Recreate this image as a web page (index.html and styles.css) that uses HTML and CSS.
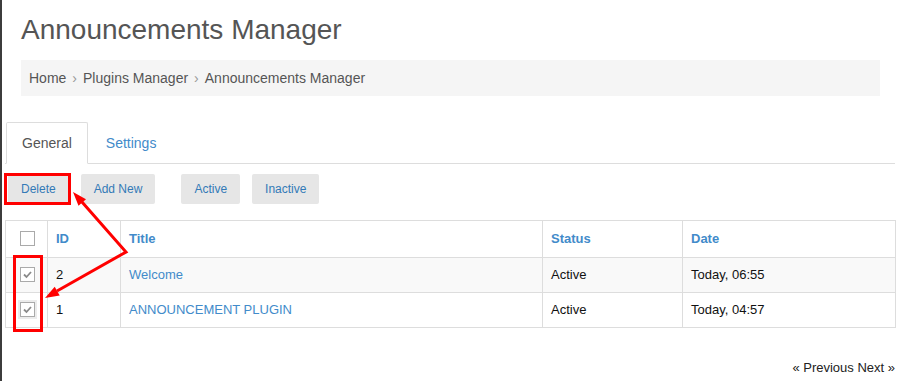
FILE: index.html
```html
<!DOCTYPE html>
<html lang="en">
<head>
  <meta charset="UTF-8" />
  <title>Announcements Manager</title>
  <link rel="stylesheet" href="styles.css">
</head>
<body>

  <div class="page">
    <div class="page-header">
      <h1>Announcements Manager</h1>
      <ol class="breadcrumb">
        <li>Home</li>
        <li>Plugins Manager</li>
        <li>Announcements Manager</li>
      </ol>
    </div>

    <ul class="tabs">
      <li class="active"><a href="#">General</a></li>
      <li><a href="#">Settings</a></li>
    </ul>

    <div class="toolbar">
      <div class="btn-group">
        <button class="btn">Delete</button>
        <button class="btn">Add New</button>
      </div>
      <div class="btn-group">
        <button class="btn">Active</button>
        <button class="btn">Inactive</button>
      </div>
    </div>

    <table class="list">
      <colgroup>
        <col class="col-check">
        <col class="col-id">
        <col class="col-title">
        <col class="col-status">
        <col class="col-date">
      </colgroup>
      <thead>
        <tr>
          <th class="check"><span class="box"></span></th>
          <th>ID</th>
          <th>Title</th>
          <th>Status</th>
          <th>Date</th>
        </tr>
      </thead>
      <tbody>
        <tr class="odd">
          <td class="check">
            <span class="box checked">
              <svg width="13" height="13" viewBox="0 0 13 13"><polyline points="3,6.5 5.5,9 10,4" fill="none" stroke="#8a8a8a" stroke-width="1.8"/></svg>
            </span>
          </td>
          <td>2</td>
          <td><a href="#">Welcome</a></td>
          <td>Active</td>
          <td>Today, 06:55</td>
        </tr>
        <tr>
          <td class="check">
            <span class="box checked focus">
              <svg width="13" height="13" viewBox="0 0 13 13"><polyline points="3,6.5 5.5,9 10,4" fill="none" stroke="#8a8a8a" stroke-width="1.8"/></svg>
            </span>
          </td>
          <td>1</td>
          <td><a href="#">ANNOUNCEMENT PLUGIN</a></td>
          <td>Active</td>
          <td>Today, 04:57</td>
        </tr>
      </tbody>
    </table>

    <div class="pager">&laquo; Previous Next &raquo;</div>
  </div>

  <!-- red annotations drawn over the screenshot -->
  <svg class="marks" width="899" height="381" viewBox="0 0 899 381">
    <g fill="none" stroke="#ff0000" stroke-width="3">
      <rect x="5.5" y="174.5" width="64" height="29"/>
      <rect x="14.5" y="256.5" width="27" height="74"/>
      <polyline points="82,202 126,252 57,291" stroke-linejoin="miter"/>
    </g>
    <g fill="#ff0000">
      <polygon points="73,192 86,199.2 78.5,205.8"/>
      <polygon points="45,298 59.7,295.4 54.7,286.8"/>
    </g>
  </svg>

</body>
</html>
```

FILE: styles.css
```css
* {
  box-sizing: border-box;
}

html, body {
  margin: 0;
  height: 100%;
}

body {
  font-family: "Liberation Sans", Arial, sans-serif;
  font-size: 13px;
  color: #222;
  background: #fff;
  border-left: 2px solid #3c3c3c;
  overflow: hidden;
}

a {
  color: #428bca;
  text-decoration: none;
}

.page {
  padding: 0 4px 0 3px;
}

.page-header {
  padding: 14px 15px 0 16px;
}

h1 {
  margin: 0;
  font-size: 28px;
  line-height: 32px;
  font-weight: normal;
  color: #555;
}

.breadcrumb {
  list-style: none;
  margin: 14px 0 0;
  padding: 8px 8px;
  background: #f5f5f5;
  font-size: 14px;
  line-height: 20px;
  color: #555;
  display: flex;
}

.breadcrumb li + li::before {
  content: "\203A";
  padding: 0 6px;
  color: #999;
}

.tabs {
  list-style: none;
  margin: 26px 0 0;
  padding: 0 0 0 1px;
  display: flex;
  border-bottom: 1px solid #ddd;
}

.tabs li {
  margin-bottom: -1px;
}

.tabs a {
  display: block;
  padding: 10px 15px;
  margin-right: 2px;
  font-size: 14px;
  line-height: 20px;
  border: 1px solid transparent;
  border-radius: 2px 2px 0 0;
}

.tabs .active a {
  color: #555;
  background: #fff;
  border-color: #ddd;
  border-bottom-color: #fff;
}

.toolbar {
  display: flex;
  gap: 26px;
  margin-top: 10px;
  padding-left: 3px;
}

.btn-group {
  display: flex;
  gap: 12px;
}

.btn {
  height: 30px;
  padding: 0 13px;
  font-family: inherit;
  font-size: 12px;
  line-height: 30px;
  color: #337ab7;
  background: #e6e6e6;
  border: none;
  border-radius: 2px;
  cursor: pointer;
}

.list {
  margin-top: 16px;
  width: 890px;
  table-layout: fixed;
  border-collapse: collapse;
  border: 1px solid #ddd;
}

.col-check { width: 42px; }
.col-id { width: 73px; }
.col-title { width: 422px; }
.col-status { width: 140px; }
.col-date { width: 213px; }

.list th,
.list td {
  border: 1px solid #ddd;
  text-align: left;
  line-height: 20px;
  font-size: 13px;
}

.list th {
  padding: 8px;
  color: #428bca;
  font-weight: bold;
}

.list td {
  padding: 7px 8px;
  color: #111;
}

.list .odd td {
  background: #f9f9f9;
}

.list .check {
  padding-left: 14px;
  padding-right: 0;
}

.box {
  display: inline-block;
  width: 15px;
  height: 15px;
  border: 1px solid #aaa;
  background: #fff;
  vertical-align: middle;
  position: relative;
  top: -1px;
}

.box svg {
  display: block;
  margin: 0;
}

.box.focus {
  box-shadow: 0 0 0 2px #ececec;
}

.pager {
  margin-top: 31px;
  text-align: right;
  font-size: 13px;
  line-height: 18px;
  color: #222;
}

.marks {
  position: absolute;
  left: 0;
  top: 0;
  pointer-events: none;
}
```
